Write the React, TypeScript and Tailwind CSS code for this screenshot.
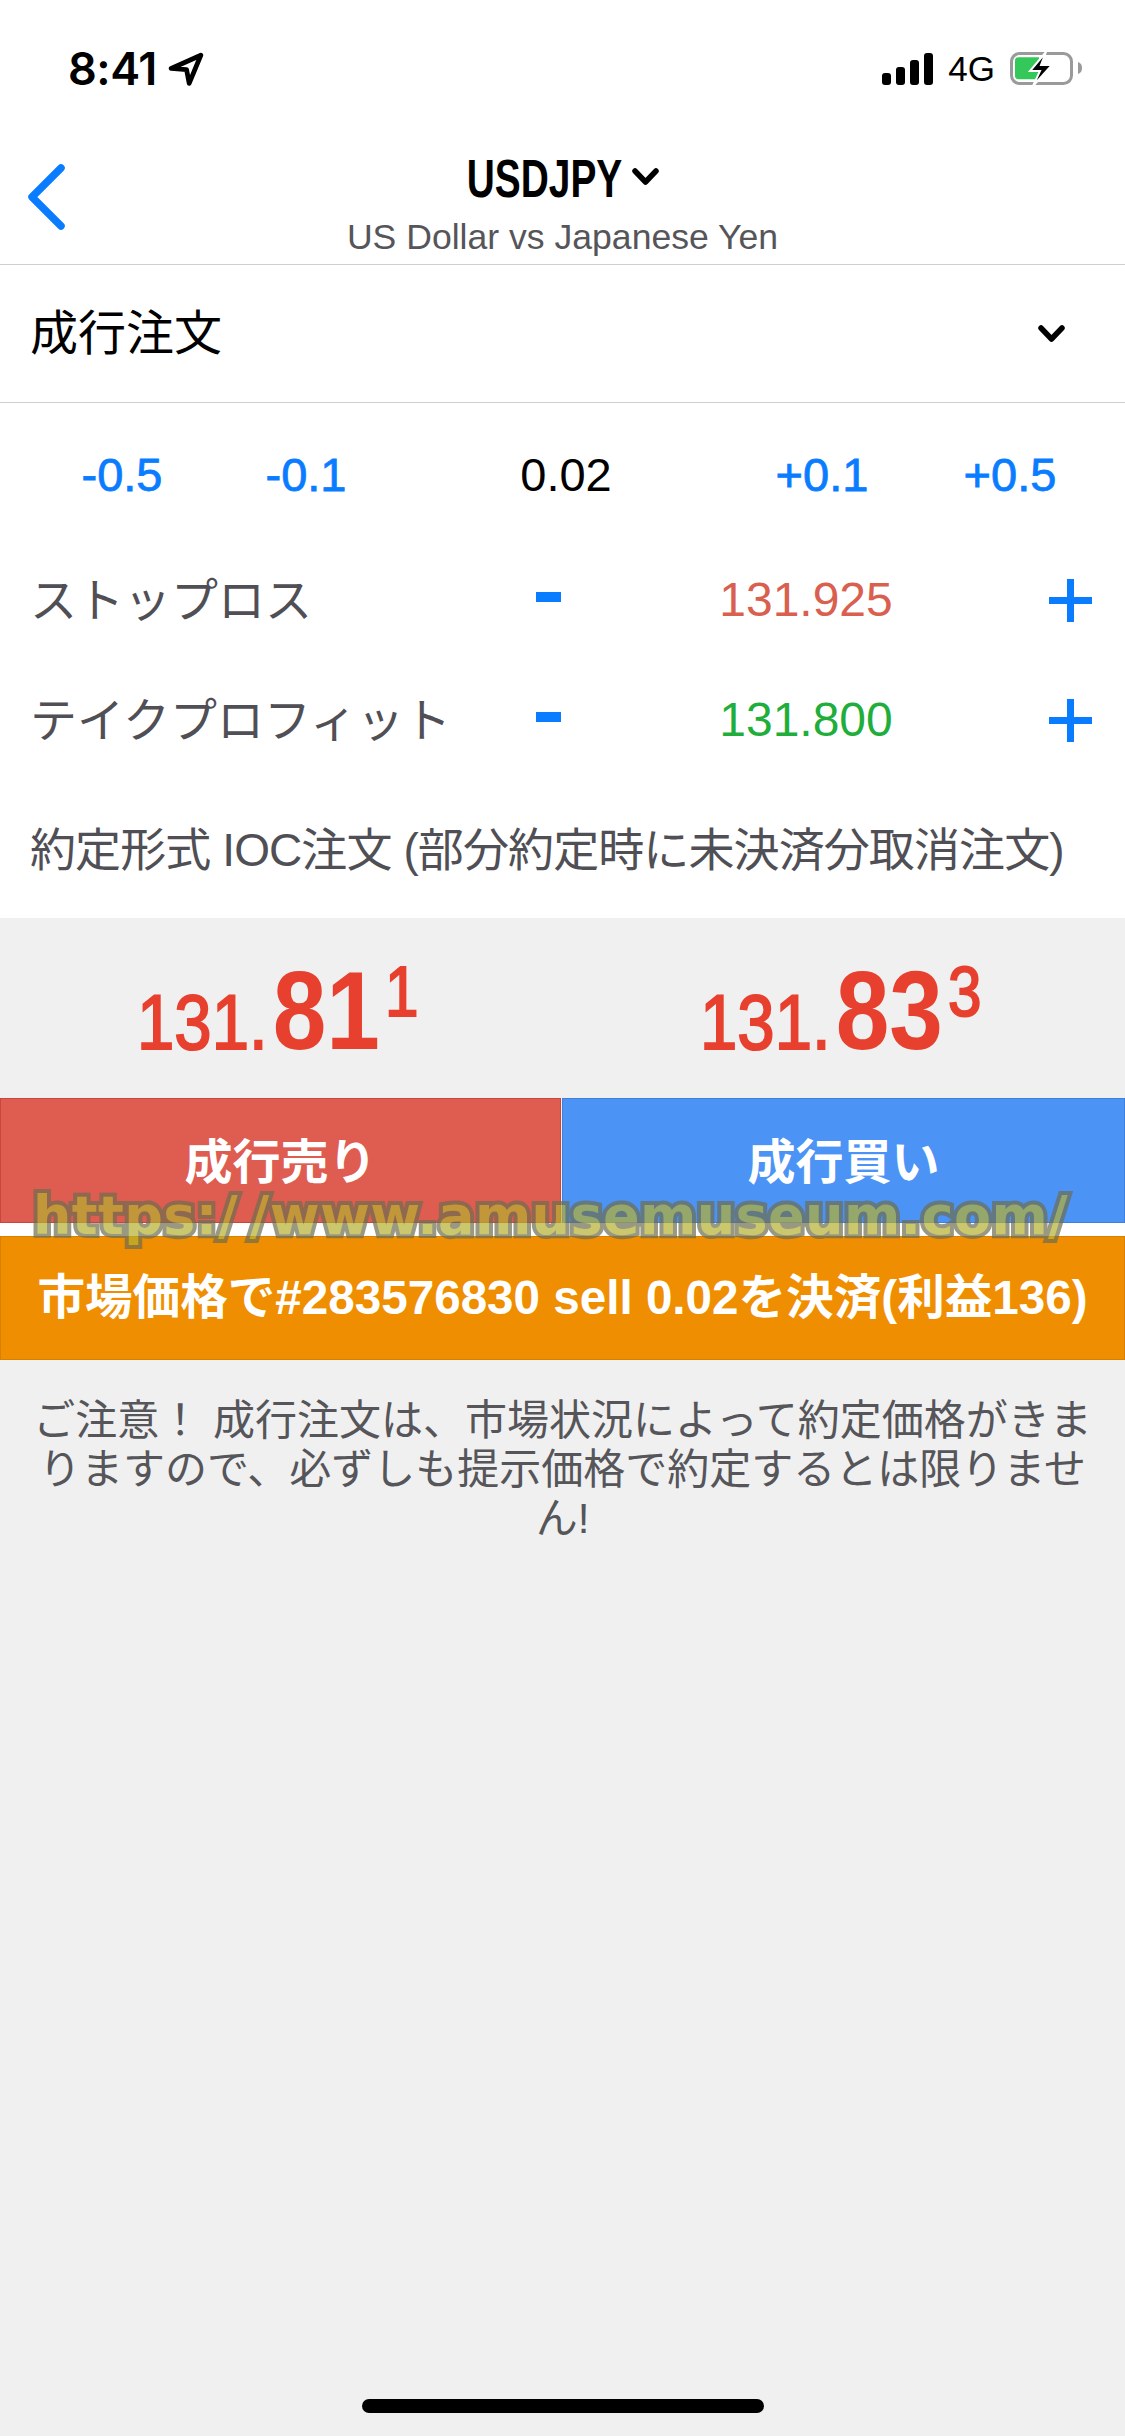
const sans = "font-['Liberation_Sans','Noto_Sans_CJK_JP',sans-serif]";

const Chevron = ({ className }: { className: string }) => (
  <svg viewBox="0 0 27 17" className={className} fill="none" stroke="currentColor" strokeWidth="5.5" strokeLinecap="round" strokeLinejoin="round">
    <path d="M3 3l10.5 11L24 3" />
  </svg>
);

const StatusBar = () => (
  <div className="h-[132px] flex items-center justify-between pl-[68px] pr-[43px] pt-[5px]">
    <div className="flex items-center gap-[11px]">
      <span className="font-['Inter'] text-[45px] leading-none font-semibold tracking-[-0.5px] text-black">8:41</span>
      <svg viewBox="0 0 34 32" className="w-[36px] h-[34px]" fill="none" stroke="#000" strokeWidth="4.5" strokeLinejoin="round">
        <path d="M31 3L3 15.5l14.5 1 2.5 13z" />
      </svg>
    </div>
    <div className="flex items-center gap-[15px]">
      <div className="flex items-end gap-[5px] h-[32px]">
        <span className="w-[9px] h-[12px] bg-black rounded-[3px]" />
        <span className="w-[9px] h-[18px] bg-black rounded-[3px]" />
        <span className="w-[9px] h-[25px] bg-black rounded-[3px]" />
        <span className="w-[9px] h-[32px] bg-black rounded-[3px]" />
      </div>
      <span className="text-[35px] leading-none text-black">4G</span>
      <svg viewBox="0 0 72 36" className="w-[72px] h-[36px]">
        <rect x="1.5" y="2.5" width="60" height="30" rx="8" fill="none" stroke="#9a9a9a" strokeWidth="3" />
        <path d="M9 6h20v25H9a4 4 0 0 1-4-4V10a4 4 0 0 1 4-4z" fill="#34c759" transform="translate(0 0) scale(1 .88) translate(0 1)" />
        <path d="M68 11c3 1 4 3 4 6s-1 5-4 6z" fill="#9a9a9a" />
        <path d="M36 1L20 20h10l-7 15 19-21H31z" fill="#000" stroke="#fff" strokeWidth="2" />
      </svg>
    </div>
  </div>
);

const NavBar = () => (
  <div className="relative h-[133px] border-b border-[#cfcfcf] flex flex-col items-center">
    <svg viewBox="0 0 42 66" className="absolute left-[26px] top-[32px] w-[42px] h-[66px]" fill="none" stroke="#0a7cff" strokeWidth="7.5" strokeLinecap="round" strokeLinejoin="round">
      <path d="M35 4L6 33l29 29" />
    </svg>
    <div className="flex items-center gap-[10px] h-[64px] mt-[14px] text-black">
      <span className="text-[54px] leading-none font-bold scale-x-[0.72] w-[155px] flex justify-center whitespace-nowrap">USDJPY</span>
      <Chevron className="w-[27px] h-[17px] mt-[-4px]" />
    </div>
    <div className="text-[35.6px] leading-[44px] text-[#55555a] mt-[5px]">US Dollar vs Japanese Yen</div>
  </div>
);

const OrderType = () => (
  <div className="h-[138px] border-b border-[#cfcfcf] flex items-center justify-between pl-[30px] pr-[60px]">
    <span className="text-[48px] leading-none text-black">成行注文</span>
    <Chevron className="w-[27px] h-[17px] text-black" />
  </div>
);

const VolumeRow = () => (
  <div className="h-[137px] pt-[5px] pl-[30px] grid grid-cols-[184px_184px_336px_184px_184px] items-center text-[47px] leading-none text-[#0a7cff]">
    <span className="text-center [-webkit-text-stroke:0.8px_#0a7cff]">-0.5</span>
    <span className="text-center [-webkit-text-stroke:0.8px_#0a7cff]">-0.1</span>
    <span className="text-center text-black">0.02</span>
    <span className="text-center mr-[8px] [-webkit-text-stroke:0.8px_#0a7cff]">+0.1</span>
    <span className="text-center [-webkit-text-stroke:0.8px_#0a7cff]">+0.5</span>
  </div>
);

const PriceRow = ({ label, value, color }: { label: string; value: string; color: string }) => (
  <div className="h-[120px] flex items-center pl-[30px] pr-[33px]">
    <span className="w-[506px] text-[47px] leading-none text-[#4f4f55] whitespace-nowrap">{label}</span>
    <span className="w-[25px] h-[10px] bg-[#0a7cff] mb-[6px]" />
    <span className={`w-[232px] ml-[129px] text-center text-[48px] leading-none ${color}`}>{value}</span>
    <div className="relative ml-auto w-[43px] h-[43px]">
      <span className="absolute left-0 right-0 top-[18px] h-[7px] bg-[#0a7cff]" />
      <span className="absolute top-0 bottom-0 left-[18px] w-[7px] bg-[#0a7cff]" />
    </div>
  </div>
);

const Price = ({ head, big, tail }: { head: string; big: string; tail: string }) => (
  <div className="flex justify-center items-baseline scale-x-[0.86] text-[#e8402e] leading-none pr-[8px]">
    <span className="text-[78px] [-webkit-text-stroke:2px_#e8402e]">{head}</span>
    <span className="text-[112px] ml-[6px] font-bold">{big}</span>
    <span className="text-[70px] ml-[6px] -translate-y-[33px] [-webkit-text-stroke:2px_#e8402e]">{tail}</span>
  </div>
);

export default function App() {
  return (
    <div className={`relative w-[1125px] h-[2436px] bg-[#f0f0f0] overflow-hidden ${sans}`}>
      <div className="bg-white">
        <StatusBar />
        <NavBar />
        <OrderType />
        <VolumeRow />
        <PriceRow label="ストップロス" value="131.925" color="text-[#d9604f]" />
        <PriceRow label="テイクプロフィット" value="131.800" color="text-[#1fae3c]" />
        <div className="h-[138px] pl-[30px] pt-[42px] text-[46px] leading-[56px] text-[#4f4f55] whitespace-nowrap tracking-[-0.9px]">
          約定形式 IOC注文 (部分約定時に未決済分取消注文)
        </div>
      </div>

      <div className="h-[180px] grid grid-cols-2 items-end pb-[31px]">
        <Price head="131." big="81" tail="1" />
        <Price head="131." big="83" tail="3" />
      </div>

      <div className="h-[125px] grid grid-cols-[561px_1fr] gap-[1px] text-white text-[48px] font-bold">
        <button className="bg-[#de5c50] border border-[#c8463c] pt-[4px]">成行売り</button>
        <button className="bg-[#4b93f5] border border-[#3f80dc] pt-[4px]">成行買い</button>
      </div>
      <div className="h-[13px] bg-white" />
      <div className="h-[124px] bg-[#ef8e00] border border-[#d98000] flex items-center justify-center text-white text-[47.6px] font-bold whitespace-nowrap">
        市場価格で#283576830 sell 0.02を決済(利益136)
      </div>

      <p className="mt-[36px] px-[30px] text-center text-[42px] leading-[49px] text-[#55555a]">
        ご注意！ 成行注文は、市場状況によって約定価格がきまりますので、必ずしも提示価格で約定するとは限りません!
      </p>

      <div className="absolute left-[33px] top-[1189px] font-['DejaVu_Sans'] text-[54px] leading-none font-bold whitespace-nowrap tracking-[0.4px] text-[#b5b030] opacity-70 [-webkit-text-stroke:8px_#6e6e50] [paint-order:stroke_fill]">
        https:<span className="tracking-[12px]">/</span>/www.amusemuseum.com/
      </div>

      <div className="absolute left-[362px] top-[2399px] w-[402px] h-[14px] rounded-full bg-black" />
    </div>
  );
}
